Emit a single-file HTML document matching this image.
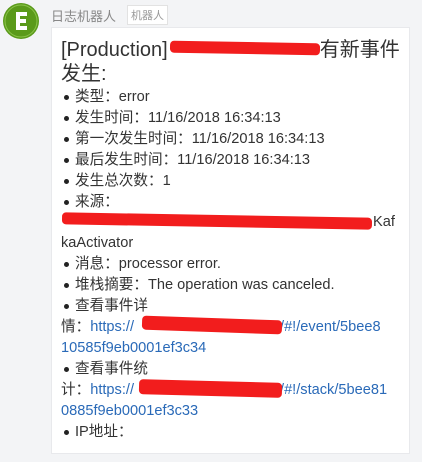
<html><head><style>
body{margin:0;width:422px;height:462px;background:#f3f4f6;font-family:"Liberation Sans","Noto Sans CJK SC",sans-serif;position:relative;overflow:hidden;color:#333}
.a{position:absolute;white-space:nowrap}
.card{position:absolute;left:51px;top:27px;width:357px;height:425px;background:#fff;border:1px solid #e8e9ec}
.l{position:absolute;left:61px;font-size:14.6px;white-space:nowrap;line-height:20px}
.b{left:75px}
.b:before{content:"";position:absolute;left:-11px;top:8px;width:5px;height:5px;border-radius:50%;background:#222}
.u{color:#2a6ab8}
.r{position:absolute;background:#f21d1d;border-radius:4px}
</style></head><body>
<svg class="a" style="left:3px;top:3px" width="36" height="36" viewBox="0 0 36 36"><circle cx="18" cy="18" r="18" fill="#5a9a1a"/><path d="M13 9h11v4h-7v3h6v4h-6v3h7v4H13z" fill="#fff"/><circle cx="18" cy="18" r="16" fill="none" stroke="#8bc34a" stroke-width="1"/></svg>
<div class="a" style="left:51px;top:6px;font-size:13px;color:#888">日志机器人</div>
<div class="a" style="left:127px;top:5px;font-size:11px;color:#999;border:1px solid #e2e2e2;padding:1px 3px;background:#fff">机器人</div>
<div class="card"></div>
<div class="l" style="top:38px;font-size:20px;line-height:25px">[Production]<span style="display:inline-block;width:152px"></span>有新事件</div>
<div class="r" style="left:170px;top:42px;width:150px;height:12px;transform:rotate(1deg)"></div>
<div class="l" style="top:62px;font-size:20px;line-height:25px">发生:</div>
<div class="l b" style="top:87px">类型：error</div>
<div class="l b" style="top:108px">发生时间：11/16/2018 16:34:13</div>
<div class="l b" style="top:129px">第一次发生时间：11/16/2018 16:34:13</div>
<div class="l b" style="top:150px">最后发生时间：11/16/2018 16:34:13</div>
<div class="l b" style="top:171px">发生总次数：1</div>
<div class="l b" style="top:192px">来源：</div>
<div class="l" style="top:212px"><span style="display:inline-block;width:312px"></span>Kaf</div>
<div class="r" style="left:62px;top:215px;width:310px;height:12px;transform:rotate(1deg)"></div>
<div class="l" style="top:233px">kaActivator</div>
<div class="l b" style="top:254px">消息：processor error.</div>
<div class="l b" style="top:275px">堆栈摘要：The operation was canceled.</div>
<div class="l b" style="top:296px">查看事件详</div>
<div class="l" style="top:317px">情：<span class="u">https://<span style="display:inline-block;width:146px"></span>/#!/event/5bee8</span></div>
<div class="r" style="left:142px;top:318px;width:140px;height:14px;transform:rotate(2deg)"></div>
<div class="l u" style="top:338px">10585f9eb0001ef3c34</div>
<div class="l b" style="top:359px">查看事件统</div>
<div class="l" style="top:380px">计：<span class="u">https://<span style="display:inline-block;width:146px"></span>/#!/stack/5bee81</span></div>
<div class="r" style="left:139px;top:381px;width:143px;height:15px;transform:rotate(1.5deg)"></div>
<div class="l u" style="top:401px">0885f9eb0001ef3c33</div>
<div class="l b" style="top:422px">IP地址：</div>
</body></html>
